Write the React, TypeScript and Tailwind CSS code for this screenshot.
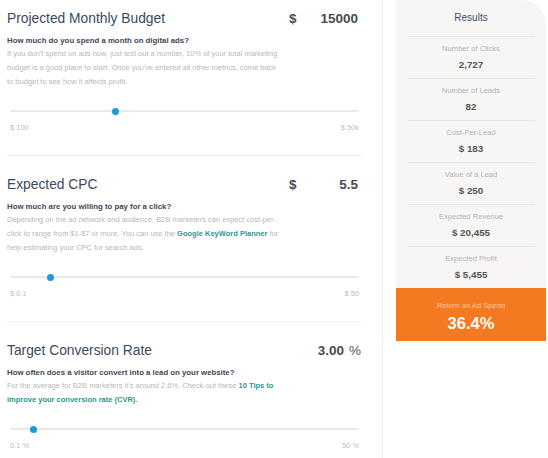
import React from "react";

const font = { fontFamily: '"Liberation Sans", Arial, sans-serif' };

type Section = {
  title: string;
  prefix?: string;
  value: string;
  suffix?: string;
  question: string;
  body: React.ReactNode;
  pct: number;
  min: string;
  max: string;
};

const Link = ({ children }: { children: React.ReactNode }) => <span className="font-bold text-[#2b9890]">{children}</span>;

const sections: Section[] = [
  {
    title: "Projected Monthly Budget", prefix: "$", value: "15000",
    question: "How much do you spend a month on digital ads?",
    body: <>If you don't spend on ads now, just test out a number, 10% of your total marketing<br />budget is a good place to start. Once you've entered all other metrics, come back<br />to budget to see how it affects profit.</>,
    pct: (15000 - 100) / (50000 - 100), min: "$ 100", max: "$ 50k",
  },
  {
    title: "Expected CPC", prefix: "$", value: "5.5",
    question: "How much are you willing to pay for a click?",
    body: <>Depending on the ad network and audience, B2B marketers can expect cost-per-<br />click to range from $1-$7 or more. You can use the <Link>Google KeyWord Planner</Link> for<br />help estimating your CPC for search ads.</>,
    pct: (5.5 - 0.1) / (50 - 0.1), min: "$ 0.1", max: "$ 50",
  },
  {
    title: "Target Conversion Rate", value: "3.00", suffix: "%",
    question: "How often does a visitor convert into a lead on your website?",
    body: <>For the average for B2B marketers it's around 2.6%. Check out these <Link>10 Tips to</Link><br /><Link>improve your conversion rate (CVR).</Link></>,
    pct: (3 - 0.1) / (50 - 0.1), min: "0.1 %", max: "50 %",
  },
];

const results = [
  ["Number of Clicks", "2,727"],
  ["Number of Leads", "82"],
  ["Cost-Per-Lead", "$ 183"],
  ["Value of a Lead", "$ 250"],
  ["Expected Revenue", "$ 20,455"],
  ["Expected Profit", "$ 5,455"],
];

function Slider({ pct }: { pct: number }) {
  return (
    <div className="relative h-[8px] mx-[3px]">
      <div className="absolute left-0 right-0 top-[3px] h-[2px] bg-[#e9e9e9] rounded-full" />
      <div className="absolute top-[0.5px] w-[7px] h-[7px] rounded-full bg-[#1c9bd8]" style={{ left: `calc(${pct} * (100% - 7px))` }} />
    </div>
  );
}

function InputSection({ s, first, last }: { s: Section; first: boolean; last: boolean }) {
  return (
    <div className={`${first ? "pt-[9px]" : "pt-[19px] border-t border-[#efefef]"} ${last ? "" : "pb-[22px]"}`}>
      <div className="flex items-center justify-between h-[20px]">
        <h2 className="text-[13.8px] leading-[20px] text-[#3b4a5c]">{s.title}</h2>
        <div className="w-[73px] flex items-center justify-between pr-[4px] text-[13.5px] text-[#4a4a4a]">
          {s.prefix ? <span className="font-bold">{s.prefix}</span> : <span />}
          <span className="flex items-center gap-[5px]">
            <span className="font-bold">{s.value}</span>
            {s.suffix && <span className="text-[#555] -mr-[3px]">{s.suffix}</span>}
          </span>
        </div>
      </div>
      <p className="mt-[6px] text-[7.8px] leading-[12px] font-bold text-[#3d4858]">{s.question}</p>
      <p className="text-[7.5px] leading-[14px] text-[#b8b8b8] whitespace-nowrap">{s.body}</p>
      <div className="mt-[18px]"><Slider pct={s.pct} /></div>
      <div className="mt-[8px] mx-[3px] flex justify-between text-[7.5px] leading-[10px] text-[#c0c0c0]">
        <span>{s.min}</span><span>{s.max}</span>
      </div>
    </div>
  );
}

export default function App() {
  return (
    <div className="w-[548px] h-[458px] flex bg-white overflow-hidden" style={font}>
      <div className="w-[383px] h-full border-r border-[#f0f0f0] pl-[7px] pr-[20px]">
        {sections.map((s, i) => <InputSection key={s.title} s={s} first={i === 0} last={i === sections.length - 1} />)}
      </div>
      <div className="pl-[13px]">
        <div className="w-[150px] bg-[#f7f6f4] rounded-tr-[24px]">
          <div className="px-[11px]">
            <div className="pt-[11px] pb-[11px] text-center text-[10px] leading-[14px] text-[#3c5068]">Results</div>
            {results.map(([label, value]) => (
              <div key={label} className="border-t border-[#e9e7e4] pt-[7px] pb-[7px] text-center">
                <div className="text-[7.6px] leading-[10px] text-[#b3b3b3]">{label}</div>
                <div className="mt-[5px] text-[9.8px] leading-[12px] font-bold text-[#555555]">{value}</div>
              </div>
            ))}
          </div>
          <div className="h-[53px] bg-[#f47920] text-center pt-[13px]">
            <div className="text-[7.6px] leading-[10px] text-[#fcc9a0]">Return on Ad Spend</div>
            <div className="mt-[2px] text-[16.5px] leading-[20px] font-bold text-white">36.4%</div>
          </div>
        </div>
      </div>
    </div>
  );
}
